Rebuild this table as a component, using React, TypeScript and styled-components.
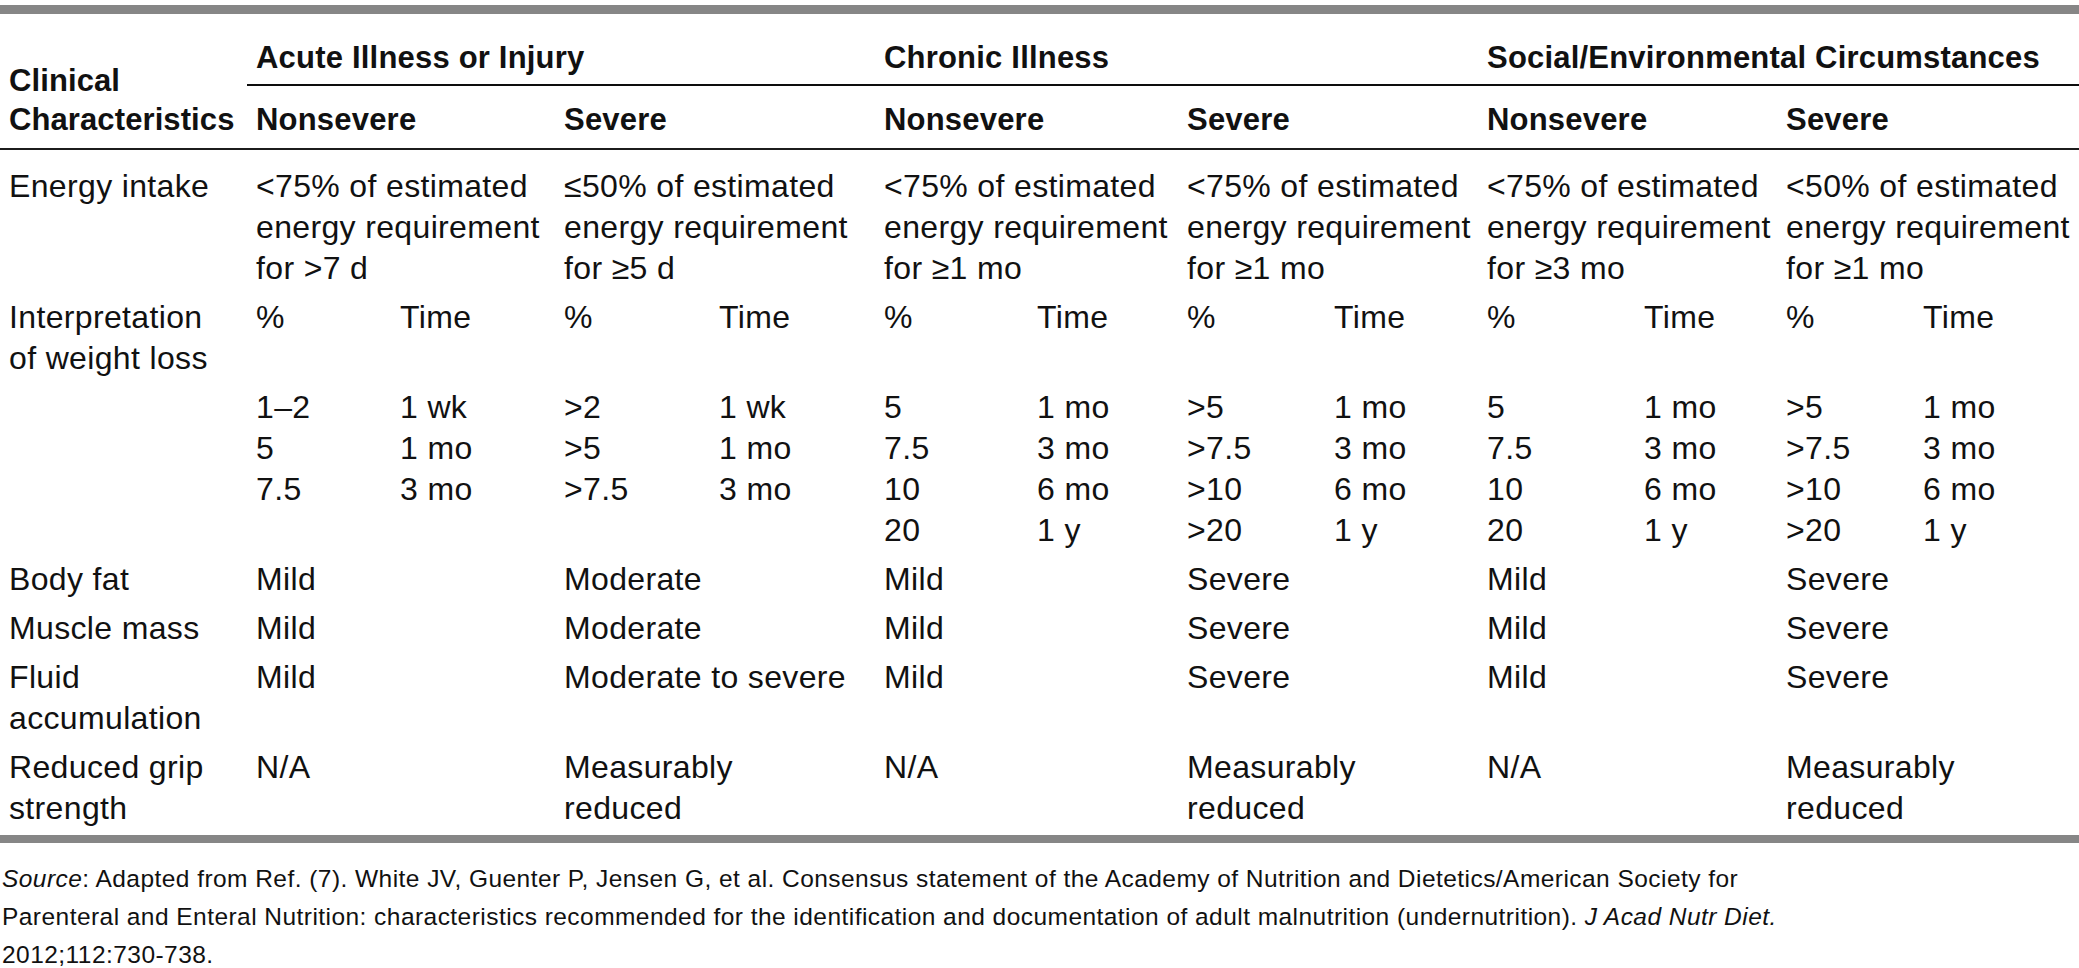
import React from 'react'
import styled, { createGlobalStyle } from 'styled-components'

const GlobalStyle = createGlobalStyle`
  html, body {
    margin: 0;
    padding: 0;
    background: #ffffff;
  }
  body {
    font-family: 'Liberation Sans', Arial, sans-serif;
    color: #111111;
  }
`

const Page = styled.div`
  width: 2079px;
  padding-top: 5px;
`

const Table = styled.div`
  display: grid;
  grid-template-columns: 247px 144px 164px 155px 165px 153px 150px 147px 153px 157px 142px 137px 165px;
  border-top: 9px solid #868686;
  border-bottom: 8px solid #868686;
`

const HeadLabel = styled.div`
  grid-row: 1 / span 2;
  display: flex;
  flex-direction: column;
  justify-content: flex-end;
  padding: 0 0 9px 9px;
  border-bottom: 2px solid #1c1c1c;
  font-size: 31px;
  font-weight: 700;
  line-height: 39px;
  letter-spacing: 0.1px;
  white-space: nowrap;
`

const GroupTitle = styled.div`
  grid-column: span 4;
  padding: 23px 0 6px 9px;
  border-bottom: 2px solid #0d0d0d;
  font-size: 31px;
  font-weight: 700;
  line-height: 41px;
  letter-spacing: 0.2px;
  white-space: nowrap;
`

const SubHead = styled.div`
  grid-column: span 2;
  padding: 13px 0 8px 9px;
  border-bottom: 2px solid #1c1c1c;
  font-size: 31px;
  font-weight: 700;
  line-height: 41px;
  letter-spacing: 0.2px;
  white-space: nowrap;
`

const Cell = styled.div<{ $span?: number; $first?: boolean; $last?: boolean }>`
  grid-column: span ${(p) => p.$span ?? 1};
  padding: ${(p) => (p.$first ? '16px' : '4px')} 0 ${(p) => (p.$last ? '6px' : '4px')} 9px;
  font-size: 32px;
  line-height: 41px;
  letter-spacing: 0.35px;
  white-space: nowrap;
`

const Footer = styled.p`
  margin: 17px 0 0;
  padding-left: 2px;
  font-size: 24.5px;
  line-height: 38px;
  letter-spacing: 0.45px;
  white-space: nowrap;
`

const Italic = styled.i`
  font-style: italic;
`

const Lines = ({ items }: { items: string[] }) => (
  <>
    {items.map((t, i) => (
      <React.Fragment key={i}>
        {i > 0 && <br />}
        {t}
      </React.Fragment>
    ))}
  </>
)

const groups = ['Acute Illness or Injury', 'Chronic Illness', 'Social/Environmental Circumstances']

const energy = [
  ['<75% of estimated', 'energy requirement', 'for >7 d'],
  ['≤50% of estimated', 'energy requirement', 'for ≥5 d'],
  ['<75% of estimated', 'energy requirement', 'for ≥1 mo'],
  ['<75% of estimated', 'energy requirement', 'for ≥1 mo'],
  ['<75% of estimated', 'energy requirement', 'for ≥3 mo'],
  ['<50% of estimated', 'energy requirement', 'for ≥1 mo'],
]

const weightLoss: [string[], string[]][] = [
  [['1–2', '5', '7.5'], ['1 wk', '1 mo', '3 mo']],
  [['>2', '>5', '>7.5'], ['1 wk', '1 mo', '3 mo']],
  [['5', '7.5', '10', '20'], ['1 mo', '3 mo', '6 mo', '1 y']],
  [['>5', '>7.5', '>10', '>20'], ['1 mo', '3 mo', '6 mo', '1 y']],
  [['5', '7.5', '10', '20'], ['1 mo', '3 mo', '6 mo', '1 y']],
  [['>5', '>7.5', '>10', '>20'], ['1 mo', '3 mo', '6 mo', '1 y']],
]

const simpleRows: { label: string[]; values: string[][] }[] = [
  {
    label: ['Body fat'],
    values: [['Mild'], ['Moderate'], ['Mild'], ['Severe'], ['Mild'], ['Severe']],
  },
  {
    label: ['Muscle mass'],
    values: [['Mild'], ['Moderate'], ['Mild'], ['Severe'], ['Mild'], ['Severe']],
  },
  {
    label: ['Fluid', 'accumulation'],
    values: [['Mild'], ['Moderate to severe'], ['Mild'], ['Severe'], ['Mild'], ['Severe']],
  },
  {
    label: ['Reduced grip', 'strength'],
    values: [
      ['N/A'],
      ['Measurably', 'reduced'],
      ['N/A'],
      ['Measurably', 'reduced'],
      ['N/A'],
      ['Measurably', 'reduced'],
    ],
  },
]

export default function App() {
  return (
    <Page>
      <GlobalStyle />
      <Table>
        <HeadLabel>
          <span>Clinical</span>
          <span>Characteristics</span>
        </HeadLabel>
        {groups.map((g) => (
          <GroupTitle key={g}>{g}</GroupTitle>
        ))}
        {groups.map((g) => (
          <React.Fragment key={g}>
            <SubHead>Nonsevere</SubHead>
            <SubHead>Severe</SubHead>
          </React.Fragment>
        ))}

        <Cell $first>Energy intake</Cell>
        {energy.map((e, i) => (
          <Cell key={i} $first $span={2}>
            <Lines items={e} />
          </Cell>
        ))}

        <Cell>
          <Lines items={['Interpretation', 'of weight loss']} />
        </Cell>
        {weightLoss.map((_, i) => (
          <React.Fragment key={i}>
            <Cell>%</Cell>
            <Cell>Time</Cell>
          </React.Fragment>
        ))}

        <Cell />
        {weightLoss.map(([pct, time], i) => (
          <React.Fragment key={i}>
            <Cell>
              <Lines items={pct} />
            </Cell>
            <Cell>
              <Lines items={time} />
            </Cell>
          </React.Fragment>
        ))}

        {simpleRows.map((row, r) => {
          const last = r === simpleRows.length - 1
          return (
            <React.Fragment key={row.label.join(' ')}>
              <Cell $last={last}>
                <Lines items={row.label} />
              </Cell>
              {row.values.map((v, i) => (
                <Cell key={i} $span={2} $last={last}>
                  <Lines items={v} />
                </Cell>
              ))}
            </React.Fragment>
          )
        })}
      </Table>
      <Footer>
        <Italic>Source</Italic>: Adapted from Ref. (7). White JV, Guenter P, Jensen G, et al. Consensus statement of
        the Academy of Nutrition and Dietetics/American Society for
        <br />
        Parenteral and Enteral Nutrition: characteristics recommended for the identification and documentation of
        adult malnutrition (undernutrition). <Italic>J Acad Nutr Diet.</Italic>
        <br />
        2012;112:730-738.
      </Footer>
    </Page>
  )
}
